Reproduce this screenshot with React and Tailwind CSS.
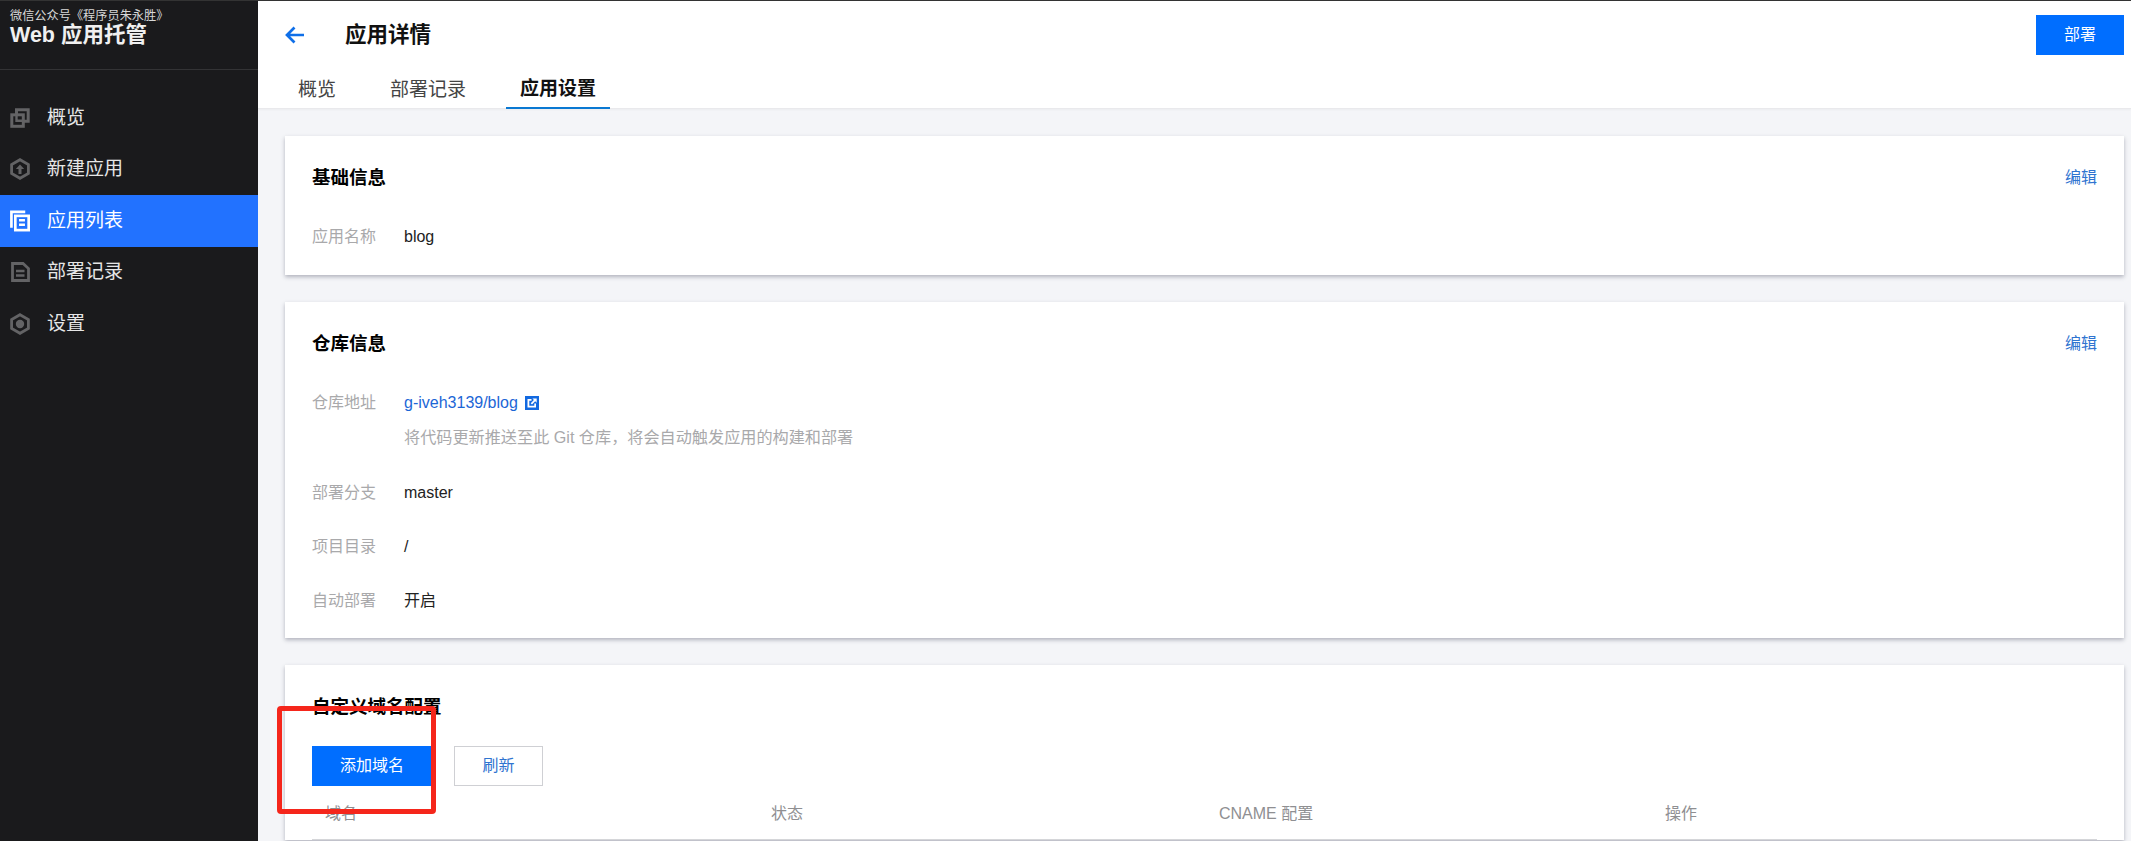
const FONT = "font-['Liberation_Sans','Noto_Sans_CJK_SC',sans-serif]";

function IconOverview() {
  return (
    <svg width="20" height="20" viewBox="0 0 20 20" fill="none" stroke="#636365" strokeWidth="3">
      <path d="M6.5 6.5V1.8H18.2V13.2H13.5" />
      <rect x="1.8" y="6.8" width="11.5" height="11.5" />
      <path d="M6.5 6.8V12.8H13.3" strokeWidth="2.4" />
    </svg>
  );
}
function IconCreate() {
  return (
    <svg width="20" height="22" viewBox="0 0 20 22" fill="none" stroke="#636365" strokeWidth="2.8">
      <path d="M1.6 11V6.6L10 1.7l8.4 4.9V11" />
      <path d="M1.6 11v4.4L10 20.3l8.4-4.9V11" />
      <path d="M10 16V9" strokeWidth="3" />
      <path d="M5.8 11 10 6.6l4.2 4.4z" fill="#636365" stroke="none" />
    </svg>
  );
}
function IconList() {
  return (
    <svg width="21" height="22" viewBox="0 0 21 22" fill="none" stroke="#fff" strokeWidth="2.8">
      <path d="M16 1.5H1.5V18" />
      <rect x="5.6" y="5.6" width="14" height="15" />
      <path d="M9.5 10.2h6.2M9.5 15h6.2" strokeWidth="2.6" />
    </svg>
  );
}
function IconRecord() {
  return (
    <svg width="19" height="20" viewBox="0 0 19 20" fill="none" stroke="#636365" strokeWidth="2.8">
      <path d="M1.5 1.5h10.5l5.5 5v12H1.5z" />
      <path d="M5 9h8.5M5 13.5h8.5" strokeWidth="2.4" />
    </svg>
  );
}
function IconSettings() {
  return (
    <svg width="20" height="22" viewBox="0 0 20 22" fill="none" stroke="#636365" strokeWidth="2.8">
      <path d="M10 1.7l8.4 4.9v8.8L10 20.3l-8.4-4.9V6.6z" />
      <circle cx="10" cy="11" r="4.2" fill="#636365" stroke="none" />
    </svg>
  );
}

function NavItem({ icon, label, active }) {
  return (
    <div className={`flex h-[51.5px] items-center pl-[10px] ${active ? "bg-[#2272ff] text-white" : "text-[#e6e6e6]"}`}>
      <span className="flex w-[20px] justify-center">{icon}</span>
      <span className="ml-[17px] text-[19px]">{label}</span>
    </div>
  );
}

function Row({ label, children, className = "" }) {
  return (
    <div className={`flex h-[24px] items-center text-[16px] ${className}`}>
      <span className="w-[92px] text-[#a9a9ab]">{label}</span>
      <span className="text-[#222]">{children}</span>
    </div>
  );
}

function CardTitle({ title, edit }) {
  return (
    <div className="flex h-[24px] items-center justify-between">
      <h2 className="text-[18.5px] font-bold text-black">{title}</h2>
      {edit && <a className="text-[16px] text-[#2f74d0]">编辑</a>}
    </div>
  );
}

const cardCls = "bg-white px-[27px] shadow-[0_2px_4px_rgba(54,58,80,0.35)]";

export default function App() {
  return (
    <div className={`${FONT} relative flex h-[841px] w-full overflow-hidden border-t border-[#333] bg-[#f4f5f8]`}>
      <aside className="w-[258px] shrink-0 bg-[#1a1a1c]">
        <div className="h-[69px] border-b border-[#333335] pl-[10px] pt-[8px]">
          <div className="text-[12.2px] leading-[14px] text-[#d8d8d8]">微信公众号《程序员朱永胜》</div>
          <div className="text-[21.5px] font-bold leading-[24px] text-[#f0f0f0]">Web 应用托管</div>
        </div>
        <nav className="pt-[22px]">
          <NavItem icon={<IconOverview />} label="概览" />
          <NavItem icon={<IconCreate />} label="新建应用" />
          <NavItem icon={<IconList />} label="应用列表" active />
          <NavItem icon={<IconRecord />} label="部署记录" />
          <NavItem icon={<IconSettings />} label="设置" />
        </nav>
      </aside>

      <main className="min-w-0 flex-1">
        <header className="h-[108px] border-b border-[#e9e9ec] bg-white shadow-[0_1px_2px_rgba(0,0,0,0.04)]">
          <div className="flex h-[54px] items-center pl-[27px] pr-[7px] pt-[14px]">
            <svg width="20" height="18" viewBox="0 0 20 18" fill="none" stroke="#0f6fe8" strokeWidth="2.7">
              <path d="M19 9H2M9.5 1.5 2 9l7.5 7.5" />
            </svg>
            <h1 className="ml-[40px] text-[21.5px] font-bold text-[#111]">应用详情</h1>
            <button className="ml-auto h-[40px] w-[88px] bg-[#006eff] text-[16px] text-white">部署</button>
          </div>
          <div className="mt-[13px] flex h-[41px] gap-[26px] pl-[26px] text-[19px]">
            <div className="flex items-center px-[14px] pt-[3px] text-[#444]">概览</div>
            <div className="flex items-center px-[14px] pt-[3px] text-[#444]">部署记录</div>
            <div className="flex items-center border-b-2 border-[#0a78d2] px-[14px] pt-[3px] font-bold text-[#111]">应用设置</div>
          </div>
        </header>

        <div className="flex flex-col gap-[27px] pl-[27px] pr-[7px] pt-[27px]">
          <section className={`${cardCls} h-[139px] pt-[30px]`}>
            <CardTitle title="基础信息" edit />
            <Row label="应用名称" className="mt-[35px]">blog</Row>
          </section>

          <section className={`${cardCls} h-[336px] pt-[30px]`}>
            <CardTitle title="仓库信息" edit />
            <Row label="仓库地址" className="mt-[35px]">
              <span className="flex items-center gap-[7px] text-[#1c66d6]">
                g-iveh3139/blog
                <svg width="14" height="14" viewBox="0 0 14 14">
                  <path d="M0 0h14v14H0z" fill="#1269e0" />
                  <path d="M2.5 3h4v1.8H4.3v5h5V7.5H11v4H2.5z" fill="#fff" />
                  <path d="M7.5 2.5h4.2v4.2L10.2 5.3 7 8.4 5.7 7.2 8.9 4z" fill="#fff" />
                </svg>
              </span>
            </Row>
            <div className="mt-[10px] h-[24px] pl-[92px] text-[16.15px] leading-[24px] text-[#a9a9ab]">将代码更新推送至此 Git 仓库，将会自动触发应用的构建和部署</div>
            <Row label="部署分支" className="mt-[32px]">master</Row>
            <Row label="项目目录" className="mt-[30px]">/</Row>
            <Row label="自动部署" className="mt-[30px]">开启</Row>
          </section>

          <section className={`${cardCls} pt-[30px]`}>
            <CardTitle title="自定义域名配置" />
            <div className="mt-[27px] flex gap-[22px]">
              <button className="h-[40px] w-[120px] bg-[#006eff] text-[16px] text-white">添加域名</button>
              <button className="h-[40px] w-[89px] border border-[#cfd0d4] bg-white text-[16px] text-[#2f74d0]">刷新</button>
            </div>
            <div className="grid h-[54px] grid-cols-[446px_448px_446px_1fr] items-center border-b border-[#d5d6d9] pl-[13px] pt-[2px] text-[16px] text-[#8f8f92]">
              <span>域名</span>
              <span>状态</span>
              <span>CNAME 配置</span>
              <span>操作</span>
            </div>
          </section>
        </div>
      </main>

      <div className="pointer-events-none absolute left-[277px] top-[705px] h-[108px] w-[159px] rounded-[4px] border-[5px] border-[#f5261b]" />
    </div>
  );
}
